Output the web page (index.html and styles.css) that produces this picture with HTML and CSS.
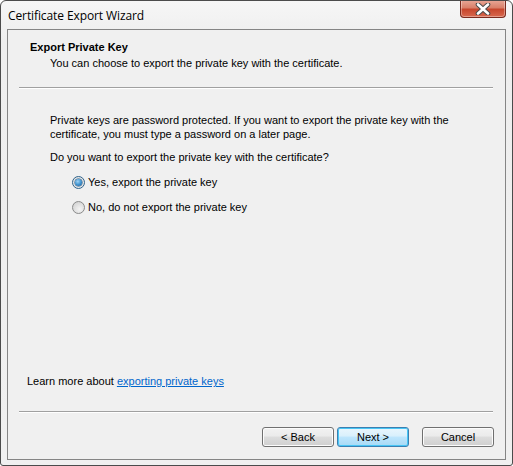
FILE: index.html
```html
<!DOCTYPE html>
<html>
<head>
<meta charset="utf-8">
<link rel="stylesheet" href="styles.css">
</head>
<body>
<div class="window">
  <div class="titlebar">
    <span class="title">Certificate Export Wizard</span>
    <div class="close">
      <svg width="18" height="12" viewBox="0 0 18 12">
        <path d="M4 1.5 L14 10.5 M14 1.5 L4 10.5" stroke="#4a4a4a" stroke-width="4.6" stroke-linecap="round"/>
        <path d="M4 1.5 L14 10.5 M14 1.5 L4 10.5" stroke="#ffffff" stroke-width="2.6" stroke-linecap="round"/>
      </svg>
    </div>
  </div>
  <div class="client">
    <div class="header">
      <div class="h-title">Export Private Key</div>
      <div class="h-sub">You can choose to export the private key with the certificate.</div>
    </div>
    <div class="sep"></div>
    <div class="content">
      <p class="para">Private keys are password protected. If you want to export the private key with the<br>certificate, you must type a password on a later page.</p>
      <p class="question">Do you want to export the private key with the certificate?</p>
      <div class="options">
        <div class="radio-row"><span class="radio checked"><span class="dot"></span></span><span>Yes, export the private key</span></div>
        <div class="radio-row"><span class="radio"></span><span>No, do not export the private key</span></div>
      </div>
    </div>
    <div class="learn">Learn more about <a class="link">exporting private keys</a></div>
    <div class="sep"></div>
    <div class="buttons">
      <div class="btn">&lt; Back</div>
      <div class="btn default">Next &gt;</div>
      <div class="btn cancel">Cancel</div>
    </div>
  </div>
</div>
</body>
</html>
```
FILE: styles.css
```css
html, body {
  margin: 0;
  padding: 0;
  background: #ffffff;
}
body {
  font-family: "Liberation Sans", Arial, sans-serif;
  font-size: 11px;
  color: #000;
}
.window {
  width: 511px;
  height: 464px;
  border: 1px solid #4b4b4b;
  border-radius: 6px 6px 3px 3px;
  background: linear-gradient(#f6f6f6, #eeeeee 40px, #f0f0f0);
  display: flex;
  flex-direction: column;
  position: relative;
  overflow: hidden;
}
.titlebar {
  height: 28px;
  display: flex;
  align-items: flex-start;
  justify-content: space-between;
}
.title {
  font-family: "Open Sans", "Liberation Sans", sans-serif;
  font-size: 12px;
  margin: 6px 0 0 7px;
  letter-spacing: -0.1px;
  color: #000;
}
.close {
  width: 44px;
  height: 17px;
  margin: -1px 6px 0 0;
  border: 1px solid #7a2a1e;
  border-top: none;
  border-radius: 0 0 4px 4px;
  background: linear-gradient(#e9a898, #d9806a 45%, #c7462d 55%, #d8694f);
  box-shadow: inset 0 0 0 1px rgba(255,255,255,0.35);
  display: flex;
  align-items: center;
  justify-content: center;
}
.client {
  margin-left: 6px;
  width: 497px;
  height: 429px;
  border: 1px solid #858585;
  background: #f0f0f0;
  display: flex;
  flex-direction: column;
}
.header {
  padding: 10px 0 0 22px;
  height: 57px;
  box-sizing: border-box;
  flex: none;
}
.h-title {
  font-weight: bold;
  line-height: 14px;
}
.h-sub {
  margin: 2px 0 0 20px;
  line-height: 14px;
}
.sep {
  height: 1px;
  flex: none;
  margin: 0 12px 0 11px;
  background: #a0a0a0;
  border-bottom: 1px solid #ffffff;
}
.content {
  padding: 24px 0 0 42px;
}
.para {
  margin: 0;
  line-height: 14px;
}
.question {
  margin: 9px 0 0 0;
  line-height: 14px;
}
.options {
  margin: 11px 0 0 22px;
  display: flex;
  flex-direction: column;
  gap: 11px;
}
.radio-row {
  display: flex;
  align-items: center;
  gap: 3px;
  height: 14px;
}
.radio {
  width: 11px;
  height: 11px;
  border: 1px solid #8a8b8b;
  border-radius: 50%;
  background: radial-gradient(circle at 60% 65%, #f4f4f4, #d8d8d8 70%, #c4c4c4);
  display: flex;
  align-items: center;
  justify-content: center;
  flex: none;
}
.radio.checked {
  border-color: #2c628b;
  background: radial-gradient(circle at 50% 55%, #f6f6f6, #e0e0e0 80%);
}
.dot {
  width: 7px;
  height: 7px;
  border-radius: 50%;
  background: radial-gradient(circle at 40% 35%, #9fd3f5, #3a8fcc 55%, #1a5590);
  box-shadow: 0 0 0 0.5px #1d4f7a;
}
.learn {
  margin: auto 0 0 19px;
  line-height: 14px;
  padding-bottom: 23px;
}
.link {
  color: #0066cc;
  text-decoration: underline;
}
.buttons {
  display: flex;
  justify-content: flex-end;
  padding: 14px 11px 0 0;
  height: 46px;
  box-sizing: border-box;
  flex: none;
}
.btn {
  width: 70px;
  height: 18px;
  border: 1px solid #707070;
  border-radius: 3px;
  background: linear-gradient(#f2f2f2, #ebebeb 45%, #dddddd 50%, #cfcfcf);
  box-shadow: inset 0 0 0 1px #fcfcfc;
  display: flex;
  align-items: center;
  justify-content: center;
  margin-left: 3px;
}
.btn.default {
  border-color: #3c7fb1;
  background: linear-gradient(#eaf6fd, #d9f0fc 45%, #bee6fd 50%, #a7d9f5);
  box-shadow: inset 0 0 0 1px #48c6f5;
}
.btn.cancel {
  margin-left: 13px;
}
```
